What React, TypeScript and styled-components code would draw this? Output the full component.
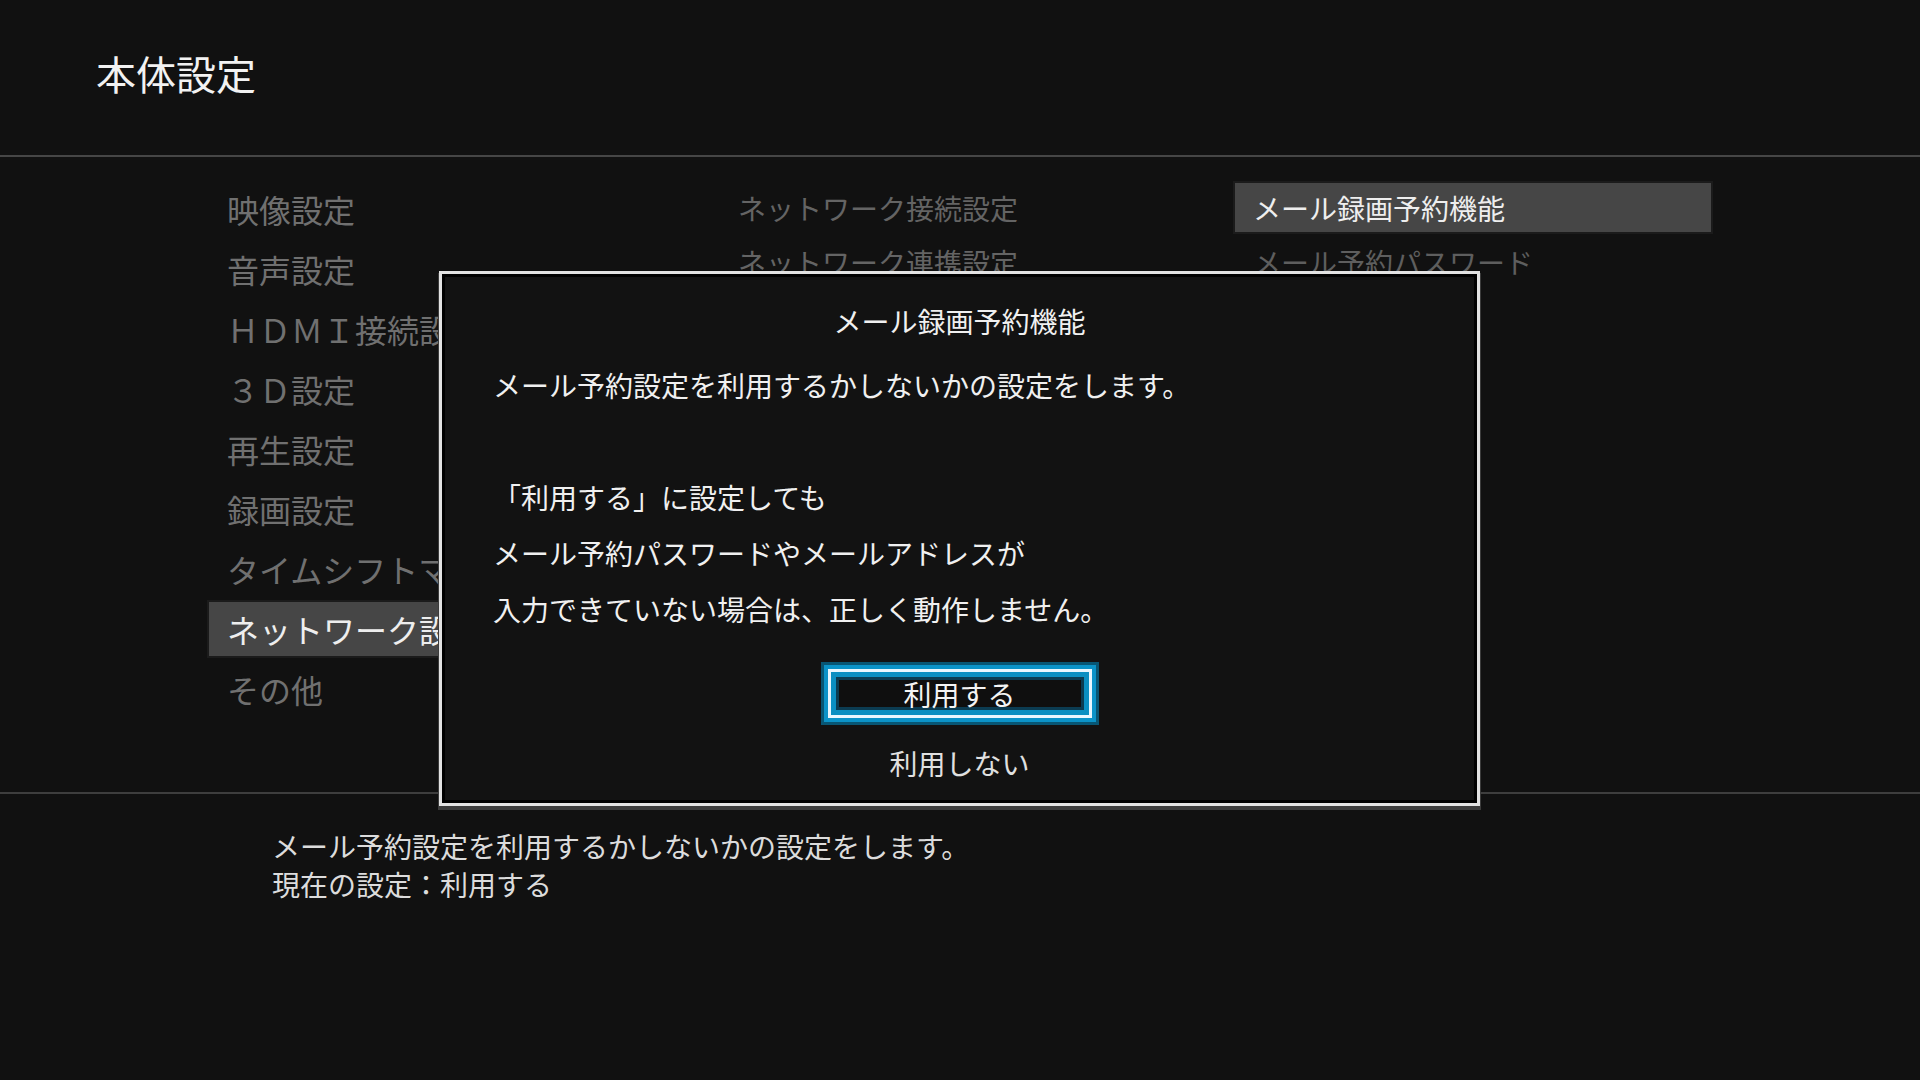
import styled, { createGlobalStyle } from "styled-components";

const GlobalStyle = createGlobalStyle`
  html, body {
    margin: 0;
    padding: 0;
    background: #111111;
  }
  body {
    font-family: "Noto Sans CJK JP", "Noto Sans", sans-serif;
    color: #e6e6e6;
  }
`;

const Screen = styled.div`
  position: relative;
  width: 1920px;
  height: 1080px;
  background: #111111;
  display: flex;
  flex-direction: column;
  overflow: hidden;
`;

const Header = styled.header`
  height: 157px;
  box-sizing: border-box;
  display: flex;
  align-items: center;
  padding: 0 0 10px 96px;
  border-bottom: 2px solid #464646;
`;

const Title = styled.h1`
  margin: 0;
  font-size: 40px;
  font-weight: 400;
  color: #f2f2f2;
  line-height: 1;
`;

const Main = styled.main`
  height: 637px;
  box-sizing: border-box;
  display: flex;
  padding-left: 209px;
  border-bottom: 2px solid #3e3e3e;
`;

const Column = styled.ul<{ $width: number; $top: number; $gap: number; $left: number }>`
  list-style: none;
  margin: 0 0 0 ${(p) => p.$left}px;
  padding: ${(p) => p.$top}px 0 0;
  width: ${(p) => p.$width}px;
  display: flex;
  flex-direction: column;
  gap: ${(p) => p.$gap}px;
`;

const MenuItem = styled.li<{ $active?: boolean; $size: number; $height: number; $dim: string }>`
  height: ${(p) => p.$height}px;
  display: flex;
  align-items: center;
  padding-left: 18px;
  font-size: ${(p) => p.$size}px;
  white-space: nowrap;
  overflow: hidden;
  color: ${(p) => (p.$active ? "#eeeeee" : p.$dim)};
  background: ${(p) => (p.$active ? "#464646" : "transparent")};
  box-shadow: ${(p) => (p.$active ? "0 0 0 2px #1b1b1b" : "none")};
`;

const Footer = styled.footer`
  padding: 33px 0 0 272px;
  font-size: 28px;
  line-height: 38px;
  color: #dcdcdc;
`;

const Dialog = styled.div`
  position: absolute;
  left: 439px;
  top: 271px;
  width: 1041px;
  height: 535px;
  box-sizing: border-box;
  border: 3px solid #e2e2e2;
  background: #121212;
  box-shadow: inset 0 0 0 3px #000000, 0 3px 0 1px #3c3c3c;
  padding: 19px 0 0 51px;
  display: flex;
  flex-direction: column;
`;

const DialogTitle = styled.div`
  text-align: center;
  margin-left: -51px;
  font-size: 28px;
  line-height: 56px;
  color: #f0f0f0;
`;

const DialogBody = styled.div`
  margin-top: 8px;
  font-size: 28px;
  line-height: 56px;
  color: #f0f0f0;
  white-space: pre;
`;

const Options = styled.div`
  margin: 32px 0 0 -51px;
  display: flex;
  flex-direction: column;
  align-items: center;
  gap: 20px;
`;

const Option = styled.div<{ $focused?: boolean }>`
  width: 264px;
  height: 49px;
  box-sizing: border-box;
  display: flex;
  align-items: center;
  justify-content: center;
  font-size: 28px;
  color: ${(p) => (p.$focused ? "#f4f4f4" : "#e0e0e0")};
  border: 3px solid ${(p) => (p.$focused ? "#e9f7ff" : "transparent")};
  background: ${(p) => (p.$focused ? "#0f0f0f" : "transparent")};
  box-shadow: ${(p) =>
    p.$focused
      ? "0 0 0 4px #0b93c8, 0 0 0 7px rgba(6, 110, 150, 0.75), inset 0 0 0 5px #0a8fc2, inset 0 0 0 8px #0b3c52"
      : "none"};
`;

const leftItems = [
  "映像設定",
  "音声設定",
  "ＨＤＭＩ接続設定",
  "３Ｄ設定",
  "再生設定",
  "録画設定",
  "タイムシフトマシン設定",
  "ネットワーク設定",
  "その他",
];

const midItems = ["ネットワーク接続設定", "ネットワーク連携設定"];
const rightItems = ["メール録画予約機能", "メール予約パスワード"];

export default function App() {
  return (
    <>
      <GlobalStyle />
      <Screen>
        <Header>
          <Title>本体設定</Title>
        </Header>
        <Main>
          <Column $width={506} $top={25} $gap={6} $left={0}>
            {leftItems.map((t, i) => (
              <MenuItem key={t} $active={i === 7} $size={32} $height={54} $dim="#707070">
                {t}
              </MenuItem>
            ))}
          </Column>
          <Column $width={495} $top={26} $gap={5} $left={5}>
            {midItems.map((t) => (
              <MenuItem key={t} $size={28} $height={49} $dim="#646464">
                {t}
              </MenuItem>
            ))}
          </Column>
          <Column $width={476} $top={26} $gap={5} $left={20}>
            {rightItems.map((t, i) => (
              <MenuItem key={t} $active={i === 0} $size={28} $height={49} $dim="#5e5e5e">
                {t}
              </MenuItem>
            ))}
          </Column>
        </Main>
        <Footer>
          <div>メール予約設定を利用するかしないかの設定をします。</div>
          <div>現在の設定：利用する</div>
        </Footer>

        <Dialog>
          <DialogTitle>メール録画予約機能</DialogTitle>
          <DialogBody>
            {"メール予約設定を利用するかしないかの設定をします。\n\n「利用する」に設定しても\nメール予約パスワードやメールアドレスが\n入力できていない場合は、正しく動作しません。"}
          </DialogBody>
          <Options>
            <Option $focused>利用する</Option>
            <Option>利用しない</Option>
          </Options>
        </Dialog>
      </Screen>
    </>
  );
}
